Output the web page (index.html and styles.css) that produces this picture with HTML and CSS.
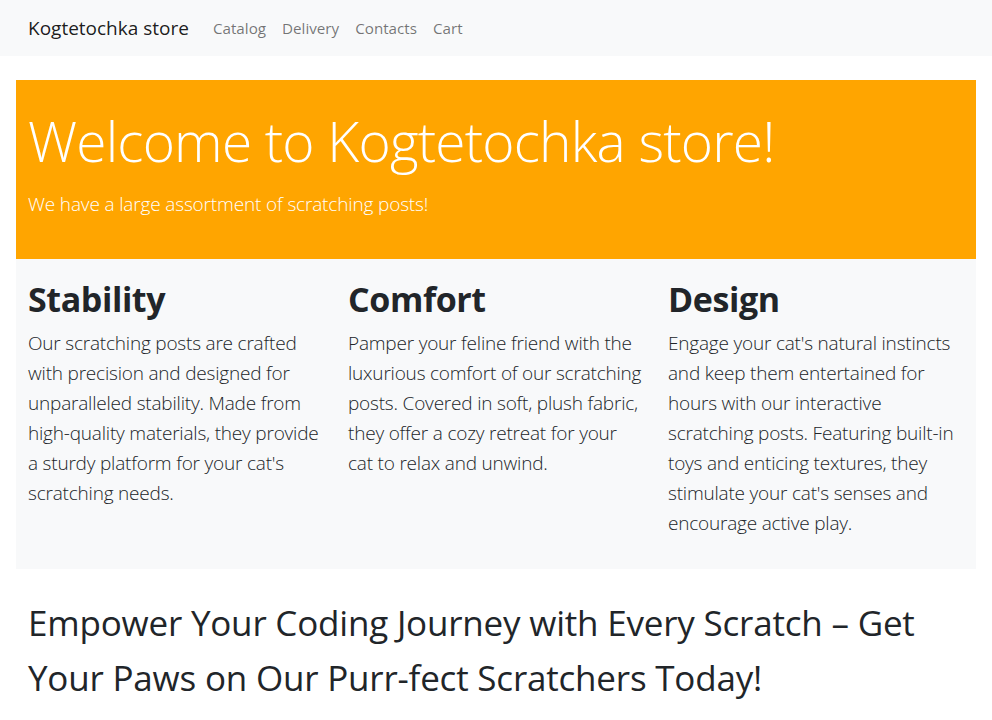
FILE: index.html
```html
<!DOCTYPE html>
<html lang="en">
<head>
<meta charset="utf-8">
<title>Kogtetochka store</title>
<link rel="stylesheet" href="styles.css">
</head>
<body>
<nav class="navbar">
  <div class="container nav-inner">
    <a class="brand" href="#">Kogtetochka store</a>
    <ul class="nav-links">
      <li><a class="nav-link" href="#">Catalog</a></li>
      <li><a class="nav-link" href="#">Delivery</a></li>
      <li><a class="nav-link" href="#">Contacts</a></li>
      <li><a class="nav-link" href="#">Cart</a></li>
    </ul>
  </div>
</nav>
<main class="container main">
  <section class="hero">
    <h1 class="hero-title">Welcome to Kogtetochka store!</h1>
    <p class="hero-lead">We have a large assortment of scratching posts!</p>
  </section>
  <section class="features">
    <div class="feature">
      <h2 class="feature-title">Stability</h2>
      <p class="feature-text">Our scratching posts are crafted with precision and designed for unparalleled stability. Made from high-quality materials, they provide a sturdy platform for your cat's scratching needs.</p>
    </div>
    <div class="feature">
      <h2 class="feature-title">Comfort</h2>
      <p class="feature-text">Pamper your feline friend with the luxurious comfort of our scratching posts. Covered in soft, plush fabric, they offer a cozy retreat for your cat to relax and unwind.</p>
    </div>
    <div class="feature">
      <h2 class="feature-title">Design</h2>
      <p class="feature-text">Engage your cat's natural instincts and keep them entertained for hours with our interactive scratching posts. Featuring built-in toys and enticing textures, they stimulate your cat's senses and encourage active play.</p>
    </div>
  </section>
  <section class="slogan">
    <h1 class="slogan-title">Empower Your Coding Journey with Every Scratch – Get Your Paws on Our Purr-fect Scratchers Today!</h1>
  </section>
</main>
</body>
</html>
```
FILE: styles.css
```css
* { box-sizing: border-box; }
html, body { margin: 0; padding: 0; }
body {
  font-family: "Open Sans", "Noto Sans", "Liberation Sans", sans-serif;
  font-size: 16px;
  line-height: 1.5;
  color: #212529;
  background: #fff;
}
.container {
  width: 960px;
  margin: 0 auto;
}
.navbar {
  background: #f8f9fa;
  padding: 8px 0;
}
.nav-inner {
  display: flex;
  align-items: center;
  padding: 0 12px;
}
.brand {
  font-size: 19px;
  line-height: 30px;
  padding: 5px 0;
  margin-right: 16px;
  color: rgba(0,0,0,.9);
  text-decoration: none;
}
.nav-links {
  display: flex;
  list-style: none;
  margin: 0;
  padding: 0;
}
.nav-link {
  display: block;
  padding: 8px;
  font-size: 15.2px;
  line-height: 24px;
  color: rgba(0,0,0,.55);
  text-decoration: none;
}
.main {
  margin-top: 24px;
}
.hero {
  background: #ffa500;
  color: #fff;
  padding: 28px 12px 24px;
}
.hero-title {
  margin: 0 0 15px;
  font-size: 55px;
  font-weight: 300;
  line-height: 66px;
  letter-spacing: -0.8px;
}
.hero-lead {
  margin: 0 0 16px;
  font-size: 19px;
  font-weight: 300;
  line-height: 30px;
  letter-spacing: -0.15px;
}
.features {
  background: #f8f9fa;
  display: grid;
  grid-template-columns: repeat(3, 1fr);
  padding: 20px 0 15px;
}
.feature {
  padding: 0 12px;
}
.feature-title {
  margin: 0 0 8px;
  font-size: 34px;
  font-weight: 700;
  line-height: 41px;
  letter-spacing: -0.4px;
}
.feature-text {
  margin: 0 0 16px;
  font-size: 19px;
  font-weight: 300;
  line-height: 30px;
  letter-spacing: -0.2px;
}
.slogan {
  padding: 0 12px;
  margin-top: 26px;
}
.slogan-title {
  margin: 0;
  font-size: 35px;
  font-weight: 400;
  line-height: 55px;
  letter-spacing: -0.2px;
}
```
